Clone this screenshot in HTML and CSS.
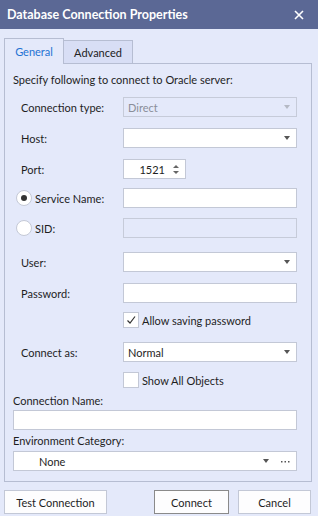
FILE: index.html
```html
<!DOCTYPE html>
<html>
<head>
<meta charset="utf-8">
<link rel="stylesheet" href="styles.css">
</head>
<body>
<div class="dialog">
  <div class="titlebar">
    <span class="title">Database Connection Properties</span>
    <svg class="close" width="10" height="10" viewBox="0 0 10 10"><path d="M1 1L9 9M9 1L1 9" stroke="#fff" stroke-width="1.6"/></svg>
  </div>
  <div class="tabs">
    <div class="tab active">General</div>
    <div class="tab adv">Advanced</div>
  </div>
  <div class="panel">
    <div class="intro">Specify following to connect to Oracle server:</div>

    <div class="row r-conn">
      <span class="label">Connection type:</span>
      <div class="field combo disabled"><span class="val">Direct</span><span class="arrow"></span></div>
    </div>

    <div class="row r-host">
      <span class="label">Host:</span>
      <div class="field combo"><span class="val"></span><span class="arrow"></span></div>
    </div>

    <div class="row r-port">
      <span class="label">Port:</span>
      <div class="field spin"><span class="num">1521</span><span class="spinbtns"><span class="up"></span><span class="down"></span></span></div>
    </div>

    <div class="row r-svc">
      <span class="radiolabel"><span class="radio checked"></span>Service Name:</span>
      <div class="field"></div>
    </div>

    <div class="row r-sid">
      <span class="radiolabel"><span class="radio"></span>SID:</span>
      <div class="field disabled"></div>
    </div>

    <div class="row r-user">
      <span class="label">User:</span>
      <div class="field combo"><span class="val"></span><span class="arrow"></span></div>
    </div>

    <div class="row r-pass">
      <span class="label">Password:</span>
      <div class="field"></div>
    </div>

    <div class="row r-cb1">
      <span class="label"></span>
      <span class="check"><span class="box"><svg width="12" height="12" viewBox="0 0 12 12"><path d="M2.5 6.5L5 9L10 2.5" fill="none" stroke="#333" stroke-width="1.2"/></svg></span>Allow saving password</span>
    </div>

    <div class="row r-as">
      <span class="label">Connect as:</span>
      <div class="field combo"><span class="val">Normal</span><span class="arrow"></span></div>
    </div>

    <div class="row r-cb2">
      <span class="label"></span>
      <span class="check"><span class="box"></span>Show All Objects</span>
    </div>

    <div class="caption r-cname">Connection Name:</div>
    <div class="field wide r-cbox"></div>

    <div class="caption r-env">Environment Category:</div>
    <div class="field wide combo r-ebox"><span class="val env">None</span><span class="arrow"></span><svg class="dots" width="9" height="2" viewBox="0 0 9 2"><rect x="0" y="0" width="1.5" height="1.5" fill="#555"/><rect x="3.5" y="0" width="1.5" height="1.5" fill="#555"/><rect x="7" y="0" width="1.5" height="1.5" fill="#555"/></svg></div>
  </div>
  <div class="buttons">
    <button class="btn test">Test Connection</button>
    <span class="spacer"></span>
    <button class="btn primary">Connect</button>
    <button class="btn cancel">Cancel</button>
  </div>
</div>
</body>
</html>
```

FILE: styles.css
```css
* { box-sizing: border-box; }
html, body { margin: 0; padding: 0; }
body {
  width: 318px;
  height: 516px;
  background: #e4e9fa;
  font-family: Lato, "Liberation Sans", sans-serif;
  font-size: 11px;
  color: #1e1e1e;
  overflow: hidden;
}
.titlebar {
  height: 29px;
  background: #5b6895;
  color: #fff;
  display: flex;
  align-items: center;
  justify-content: space-between;
  padding: 0 14px 0 7px;
}
.title { font-weight: bold; font-size: 12.5px; }
.close { display: block; }

.tabs {
  display: flex;
  align-items: flex-end;
  padding-left: 4px;
  margin-top: 9px;
  height: 26px;
  margin-bottom: -1px;
  position: relative;
  z-index: 1;
}
.tab {
  height: 24px;
  border: 1px solid #b6bdd2;
  border-left: none;
  background: #d8def5;
  display: flex;
  align-items: center;
  justify-content: center;
  color: #222;
}
.tab.adv { width: 69px; }
.tab.active {
  width: 60px;
  height: 26px;
  border-left: 1px solid #b6bdd2;
  border-bottom: none;
  background: #e4e9fa;
  color: #1f73d3;
  padding-bottom: 1px;
}

.panel {
  margin-left: 4px;
  width: 308px;
  height: 419px;
  border: 1px solid #b6bdd2;
  padding: 8px 14px 0 8px;
}
.intro { line-height: 16px; height: 16px; }

.row { display: flex; align-items: center; height: 20px; }
.label { width: 110px; padding-left: 8px; flex: none; }
.radiolabel { width: 110px; padding-left: 3px; flex: none; display: flex; align-items: center; }
.radio {
  width: 16px; height: 16px; border-radius: 50%;
  border: 1px solid #c4c9d6; background: #fff;
  margin-right: 3px; display: flex; align-items: center; justify-content: center;
}
.radio.checked::after {
  content: ""; width: 6px; height: 6px; border-radius: 50%; background: #333;
}

.field {
  width: 174px;
  height: 20px;
  background: #fff;
  border: 1px solid #c3c8d6;
  display: flex;
  align-items: center;
  flex: none;
}
.field.disabled { background: #e4e9fa; border-color: #c6cbd9; color: #8a8e99; }
.field.wide { width: 284px; }
.val { flex: 1; padding-left: 4px; }
.arrow {
  width: 0; height: 0;
  border-left: 3.5px solid transparent;
  border-right: 3.5px solid transparent;
  border-top: 4px solid #555;
  margin-right: 6px;
}
.disabled .arrow { border-top-color: #b5b9c4; }

.spin { width: 63px; justify-content: flex-end; }
.num { padding-right: 8px; }
.spinbtns { display: flex; flex-direction: column; gap: 3px; margin-right: 6px; }
.spinbtns .up { width: 0; height: 0; border-left: 3px solid transparent; border-right: 3px solid transparent; border-bottom: 3px solid #666; }
.spinbtns .down { width: 0; height: 0; border-left: 3px solid transparent; border-right: 3px solid transparent; border-top: 3px solid #666; }

.check { display: flex; align-items: center; }
.box {
  width: 16px; height: 16px; background: #fff; border: 1px solid #c3c8d6;
  margin-right: 3px; display: flex; align-items: center; justify-content: center;
}

.r-conn { margin-top: 9px; }
.r-host { margin-top: 11px; }
.r-port { margin-top: 11px; }
.r-svc { margin-top: 9px; }
.r-sid { margin-top: 10px; }
.r-user { margin-top: 14px; }
.r-pass { margin-top: 11px; }
.r-cb1 { margin-top: 9px; height: 16px; }
.r-as { margin-top: 14px; }
.r-cb2 { margin-top: 10px; height: 16px; }
.caption { line-height: 16px; height: 16px; }
.r-cname { margin-top: 5px; }
.r-cbox { margin-top: 1px; }
.r-env { margin-top: 3px; }
.r-ebox { margin-top: 2px; }
.env { padding-left: 25px; }
.dots { display: block; margin: 2px 6px 0 6px; }

.buttons {
  display: flex;
  margin-top: 8px;
  padding: 0 7px 0 4px;
}
.spacer { flex: 1; }
.btn {
  height: 24px;
  font-family: inherit;
  font-size: 11px;
  color: #1e1e1e;
  background: #fdfdfe;
  border: 1px solid #c3c8d6;
  padding: 0;
}
.btn.test { width: 103px; }
.btn.primary { width: 75px; border-color: #8a8a8a; margin-right: 9px; }
.btn.cancel { width: 73px; }
```
